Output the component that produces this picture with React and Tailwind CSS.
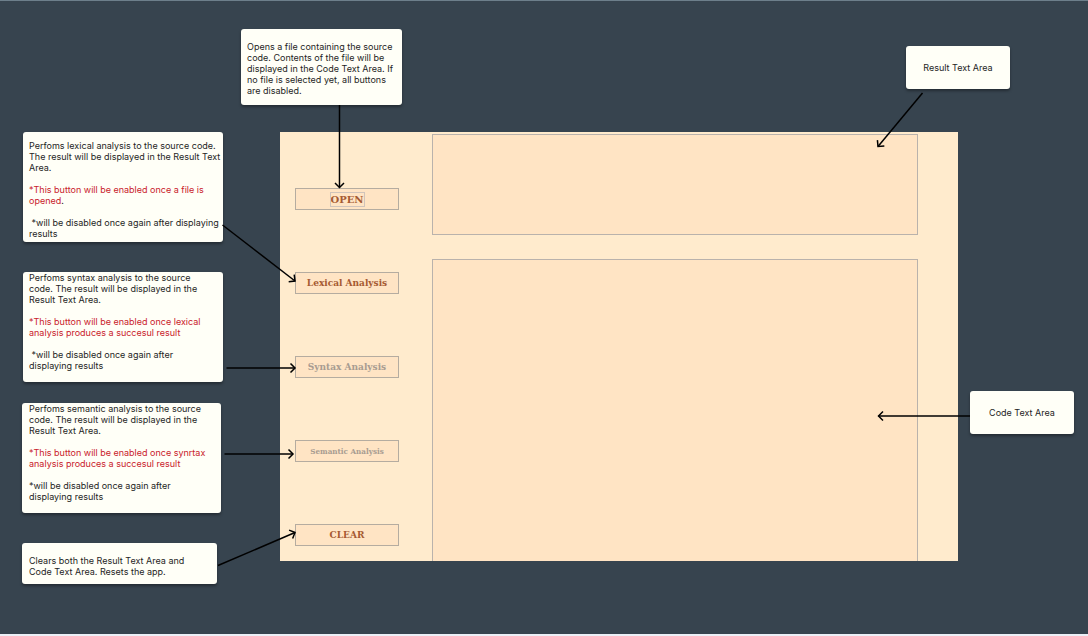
import React from 'react';

function Note({ className, children }) {
  return (
    <div
      className={`absolute rounded-[3px] bg-[#fffff7] font-['Inter',sans-serif] text-[9px] leading-[11px] text-[#1e1e1e] shadow-[0_2px_3px_rgba(0,0,0,0.35)] ${className}`}
    >
      {children}
    </div>
  );
}

function Highlight({ children }) {
  return <p className="my-[11px] text-[#c9212b]">{children}</p>;
}

function ActionButton({ className, disabled, children }) {
  return (
    <button
      type="button"
      disabled={disabled}
      className={`flex h-[22px] w-full items-center justify-center whitespace-nowrap border border-[#b5aca0] bg-[#ffe4c4] font-bold leading-[13px] ${className}`}
    >
      {children}
    </button>
  );
}

function AppWindow() {
  return (
    <section
      aria-label="Analyzer"
      className="absolute left-[280px] top-[132px] flex min-h-[429px] w-[678px] gap-[33px] bg-[#ffebcd] pl-[15px] pr-10"
    >
      <div className="flex w-[104px] flex-col gap-[62px] pt-[56px]">
        <ActionButton className="font-['DejaVu_Serif',serif] text-[10px] text-[#a65a32]">
          <span className="outline outline-1 outline-[#d0c4bb]">OPEN</span>
        </ActionButton>
        <ActionButton className="font-['DejaVu_Serif',serif] text-[9px] text-[#a65a32]">
          Lexical Analysis
        </ActionButton>
        <ActionButton disabled className="font-['DejaVu_Serif',serif] text-[9px] text-[#a89c91]">
          Syntax Analysis
        </ActionButton>
        <ActionButton disabled className="font-['DejaVu_Serif_Condensed','DejaVu_Serif',serif] text-[8px] text-[#a89c91]">
          Semantic Analysis
        </ActionButton>
        <ActionButton className="font-['DejaVu_Serif',serif] text-[9px] text-[#a65a32]">
          CLEAR
        </ActionButton>
      </div>
      <div className="flex flex-1 flex-col gap-6 pt-[2px]">
        <textarea
          id="result"
          readOnly
          className="h-[101px] w-full resize-none border border-[#b9b2ac] bg-[#ffe4c4] p-2 outline-none"
        />
        <textarea
          id="code"
          className="w-full flex-1 resize-none border border-b-0 border-[#b9b2ac] bg-[#ffe4c4] p-2 outline-none"
        />
      </div>
    </section>
  );
}

function Arrows() {
  return (
    <svg
      aria-hidden="true"
      className="pointer-events-none absolute left-0 top-0 h-[633px] w-[1088px]"
      viewBox="0 0 1088 633"
      fill="none"
      stroke="#000"
      strokeWidth="1.5"
    >
      <defs>
        <marker
          id="head"
          viewBox="0 0 8 12"
          refX="6.5"
          refY="6"
          markerWidth="8"
          markerHeight="12"
          markerUnits="userSpaceOnUse"
          orient="auto"
        >
          <path d="M2 1.5 6.5 6 2 10.5" fill="none" stroke="#000" strokeWidth="1.5" />
        </marker>
      </defs>
      <path markerEnd="url(#head)" d="M339.5 105V187.500" />
      <path markerEnd="url(#head)" d="M222.500 225 295 281" />
      <path markerEnd="url(#head)" d="M226.500 368H295" />
      <path markerEnd="url(#head)" d="M224.500 454H293" />
      <path markerEnd="url(#head)" d="M218 565.500 295 532.500" />
      <path markerEnd="url(#head)" d="M922.500 93 878 146.500" />
      <path markerEnd="url(#head)" d="M970 416H878.500" />
    </svg>
  );
}

export default function App() {
  return (
    <main className="relative min-h-screen overflow-hidden border-b-2 border-t border-b-[#eceff7] border-t-[#6d7f8b] bg-[#37444f]">
      <div className="absolute inset-x-0 -top-px">
        <AppWindow />

        <Note className="left-[241px] top-[29px] w-[161px] whitespace-nowrap pb-[9px] pl-[6px] pt-[12px]">
          Opens a file containing the source
          <br />
          code. Contents of the file will be
          <br />
          displayed in the Code Text Area. If
          <br />
          no file is selected yet, all buttons
          <br />
          are disabled.
        </Note>

        <Note className="left-[23px] top-[132px] h-[110px] w-[200px] whitespace-nowrap pl-[6px] pt-[8px]">
          <p>
            Perfoms lexical analysis to the source code.
            <br />
            The result will be displayed in the Result Text
            <br />
            Area.
          </p>
          <Highlight>
            *This button will be enabled once a file is
            <br />
            opened<span className="text-[#1e1e1e]">.</span>
          </Highlight>
          <p>
            &nbsp;*will be disabled once again after displaying
            <br />
            results
          </p>
        </Note>

        <Note className="left-[23px] top-[272px] h-[110px] w-[200px] whitespace-nowrap pl-[6px]">
          <p>
            Perfoms syntax analysis to the source
            <br />
            code. The result will be displayed in the
            <br />
            Result Text Area.
          </p>
          <Highlight>
            *This button will be enabled once lexical
            <br />
            analysis produces a succesul result
          </Highlight>
          <p>
            &nbsp;*will be disabled once again after
            <br />
            displaying results
          </p>
        </Note>

        <Note className="left-[22px] top-[403px] h-[110px] w-[199px] whitespace-nowrap pl-[7px]">
          <p>
            Perfoms semantic analysis to the source
            <br />
            code. The result will be displayed in the
            <br />
            Result Text Area.
          </p>
          <Highlight>
            *This button will be enabled once synrtax
            <br />
            analysis produces a succesul result
          </Highlight>
          <p>
            *will be disabled once again after
            <br />
            displaying results
          </p>
        </Note>

        <Note className="left-[22px] top-[543px] w-[195px] whitespace-nowrap pb-[7px] pl-[7px] pt-[12px]">
          Clears both the Result Text Area and
          <br />
          Code Text Area. Resets the app.
        </Note>

        <Note className="left-[906px] top-[46px] flex h-[43px] w-[104px] items-center justify-center">
          <label htmlFor="result">Result Text Area</label>
        </Note>

        <Note className="left-[970px] top-[391px] flex h-[43px] w-[104px] items-center justify-center">
          <label htmlFor="code">Code Text Area</label>
        </Note>

        <Arrows />
      </div>
    </main>
  );
}
